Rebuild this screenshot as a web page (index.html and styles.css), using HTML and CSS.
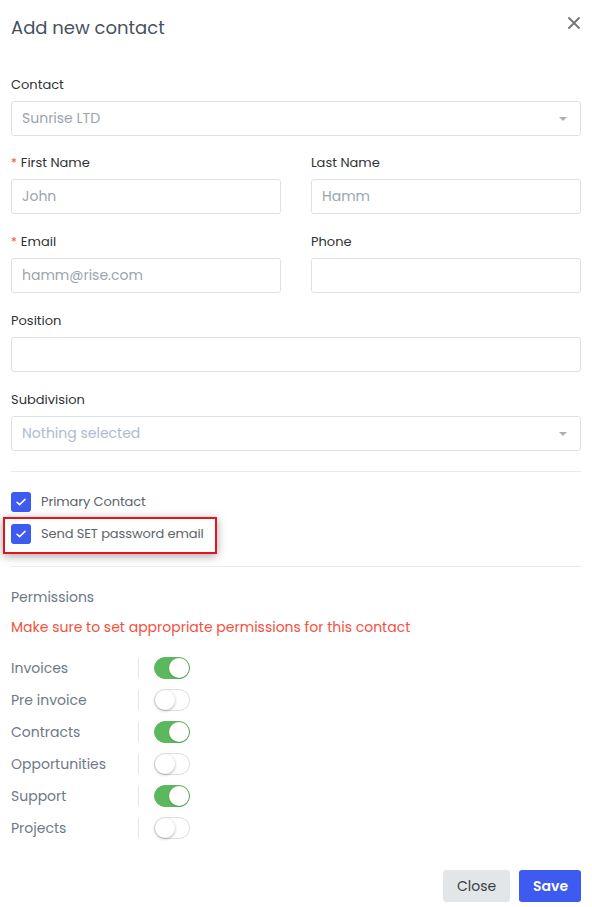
FILE: index.html
```html
<!DOCTYPE html>
<html lang="en">
<head>
<meta charset="utf-8">
<title>Add new contact</title>
<link rel="stylesheet" href="styles.css">
</head>
<body>
<div class="modal">
  <header class="modal-header">
    <h1 class="modal-title">Add new contact</h1>
    <button class="close-x" aria-label="Close">
      <svg width="12" height="12" viewBox="0 0 12 12"><path d="M1 1L11 11M11 1L1 11" stroke="#6f7479" stroke-width="1.8" stroke-linecap="round"/></svg>
    </button>
  </header>

  <div class="group first">
    <label class="label">Contact</label>
    <div class="input select"><span class="ph">Sunrise LTD</span><span class="caret"></span></div>
  </div>

  <div class="row2">
    <div class="group">
      <label class="label"><span class="req">*</span>First Name</label>
      <div class="input"><span class="ph">John</span></div>
    </div>
    <div class="group">
      <label class="label">Last Name</label>
      <div class="input"><span class="ph">Hamm</span></div>
    </div>
  </div>

  <div class="row2">
    <div class="group">
      <label class="label"><span class="req">*</span>Email</label>
      <div class="input"><span class="ph">hamm@rise.com</span></div>
    </div>
    <div class="group">
      <label class="label">Phone</label>
      <div class="input"></div>
    </div>
  </div>

  <div class="group">
    <label class="label">Position</label>
    <div class="input"></div>
  </div>

  <div class="group last">
    <label class="label">Subdivision</label>
    <div class="input select"><span class="ph light">Nothing selected</span><span class="caret"></span></div>
  </div>

  <hr class="sep">

  <div class="checks">
    <div class="check-row">
      <span class="cb"><svg width="12" height="10" viewBox="0 0 12 10"><path d="M2 5.2L4.6 7.6L10 2.4" fill="none" stroke="#fff" stroke-width="1.5" stroke-linecap="round" stroke-linejoin="round"/></svg></span>
      <span class="cb-label">Primary Contact</span>
    </div>
    <div class="check-row highlight">
      <span class="cb"><svg width="12" height="10" viewBox="0 0 12 10"><path d="M2 5.2L4.6 7.6L10 2.4" fill="none" stroke="#fff" stroke-width="1.5" stroke-linecap="round" stroke-linejoin="round"/></svg></span>
      <span class="cb-label">Send SET password email</span>
    </div>
  </div>

  <hr class="sep sep2">

  <div class="perm-title">Permissions</div>
  <div class="perm-warn">Make sure to set appropriate permissions for this contact</div>

  <div class="perms">
    <div class="perm"><span class="perm-name">Invoices</span><span class="toggle on"></span></div>
    <div class="perm"><span class="perm-name">Pre invoice</span><span class="toggle"></span></div>
    <div class="perm"><span class="perm-name">Contracts</span><span class="toggle on"></span></div>
    <div class="perm"><span class="perm-name">Opportunities</span><span class="toggle"></span></div>
    <div class="perm"><span class="perm-name">Support</span><span class="toggle on"></span></div>
    <div class="perm"><span class="perm-name">Projects</span><span class="toggle"></span></div>
  </div>

  <footer class="footer">
    <button class="btn btn-close">Close</button>
    <button class="btn btn-save">Save</button>
  </footer>
</div>
</body>
</html>
```
FILE: styles.css
```css
* { box-sizing: border-box; }
html, body { margin: 0; padding: 0; background: #fff; }
body {
  font-family: "Poppins", "Open Sans", "Liberation Sans", sans-serif;
  color: #343a40;
  width: 592px;
}
.modal { padding: 0 11px 0 11px; }

.modal-header {
  display: flex;
  align-items: center;
  justify-content: space-between;
  height: 54px;
  margin-bottom: 21px;
}
.modal-title {
  margin: 0;
  font-size: 18px;
  font-weight: 400;
  color: #46515c;
}
.close-x {
  border: 0;
  background: none;
  padding: 0;
  margin: 0 1px 8px 0;
  width: 12px;
  height: 12px;
  display: flex;
}

.group { margin-bottom: 18px; }
.group.first { margin-bottom: 17px; }
.group.last { margin-bottom: 20px; }
.label {
  display: block;
  font-size: 13px;
  line-height: 20px;
  color: #2f3235;
  margin-bottom: 6px;
}
.req { color: #f0543c; margin-right: 4px; font-size: 12px; }
.input {
  height: 35px;
  border: 1px solid #dde1e6;
  border-radius: 3px;
  display: flex;
  align-items: center;
  padding: 0 10px;
  font-size: 14px;
}
.ph { color: #9ba4ae; }
.ph.light { color: #aebbcc; }
.select { justify-content: space-between; padding-right: 13px; }
.caret {
  width: 0; height: 0;
  border-left: 4px solid transparent;
  border-right: 4px solid transparent;
  border-top: 4px solid #a9b0b8;
}
.row2 {
  display: grid;
  grid-template-columns: 270px 270px;
  column-gap: 30px;
}

.sep {
  border: 0;
  border-top: 1px solid #e9ecef;
  margin: 0 0 20px 0;
  width: 570px;
}
.sep2 { margin-top: 22px; margin-bottom: 20px; }

.checks { display: flex; flex-direction: column; gap: 12px; }
.check-row {
  display: flex;
  align-items: center;
  gap: 10px;
  height: 20px;
  position: relative;
}
.cb {
  width: 20px; height: 20px;
  border-radius: 3px;
  background: #3d5af1;
  display: flex;
  align-items: center;
  justify-content: center;
  flex: none;
}
.cb-label { font-size: 13px; color: #5c636a; letter-spacing: -0.1px; }
.highlight::before {
  content: "";
  position: absolute;
  left: -8px;
  top: -7px;
  width: 210px;
  height: 33px;
  border: 2px solid #e5141c;
  box-shadow: 0 2px 9px rgba(0,0,0,0.35);
  pointer-events: none;
}

.perm-title {
  font-size: 14px;
  line-height: 20px;
  color: #6b7886;
  margin-bottom: 10px;
}
.perm-warn {
  font-size: 14px;
  line-height: 20px;
  color: #f4503e;
  margin-bottom: 20px;
}
.perms { display: flex; flex-direction: column; gap: 10px; }
.perm { display: flex; align-items: center; height: 22px; }
.perm-name {
  width: 128px;
  height: 20px;
  line-height: 20px;
  font-size: 14px;
  color: #6d7987;
  border-right: 1px solid #e4e6e8;
  margin-right: 15px;
}
.toggle {
  position: relative;
  width: 36px;
  height: 22px;
  border-radius: 11px;
  border: 1px solid #dedede;
  background: #fff;
}
.toggle::after {
  content: "";
  position: absolute;
  top: 0;
  left: 0;
  width: 20px;
  height: 20px;
  border-radius: 50%;
  background: #fff;
  box-shadow: 0 1px 3px rgba(0,0,0,0.3);
}
.toggle.on { background: #5cb85c; border-color: #5cb85c; }
.toggle.on::after { left: 14px; box-shadow: 0 1px 2px rgba(0,0,0,0.2); }

.footer {
  display: flex;
  justify-content: flex-end;
  gap: 9px;
  margin-top: 31px;
}
.btn {
  height: 32px;
  border: 0;
  border-radius: 3px;
  font-family: inherit;
  font-size: 14px;
  padding: 0 14px;
}
.btn-close { background: #e2e6e9; color: #3a3f44; width: 67px; }
.btn-save { background: #3d5af1; color: #fff; font-weight: 600; width: 62px; }
```
